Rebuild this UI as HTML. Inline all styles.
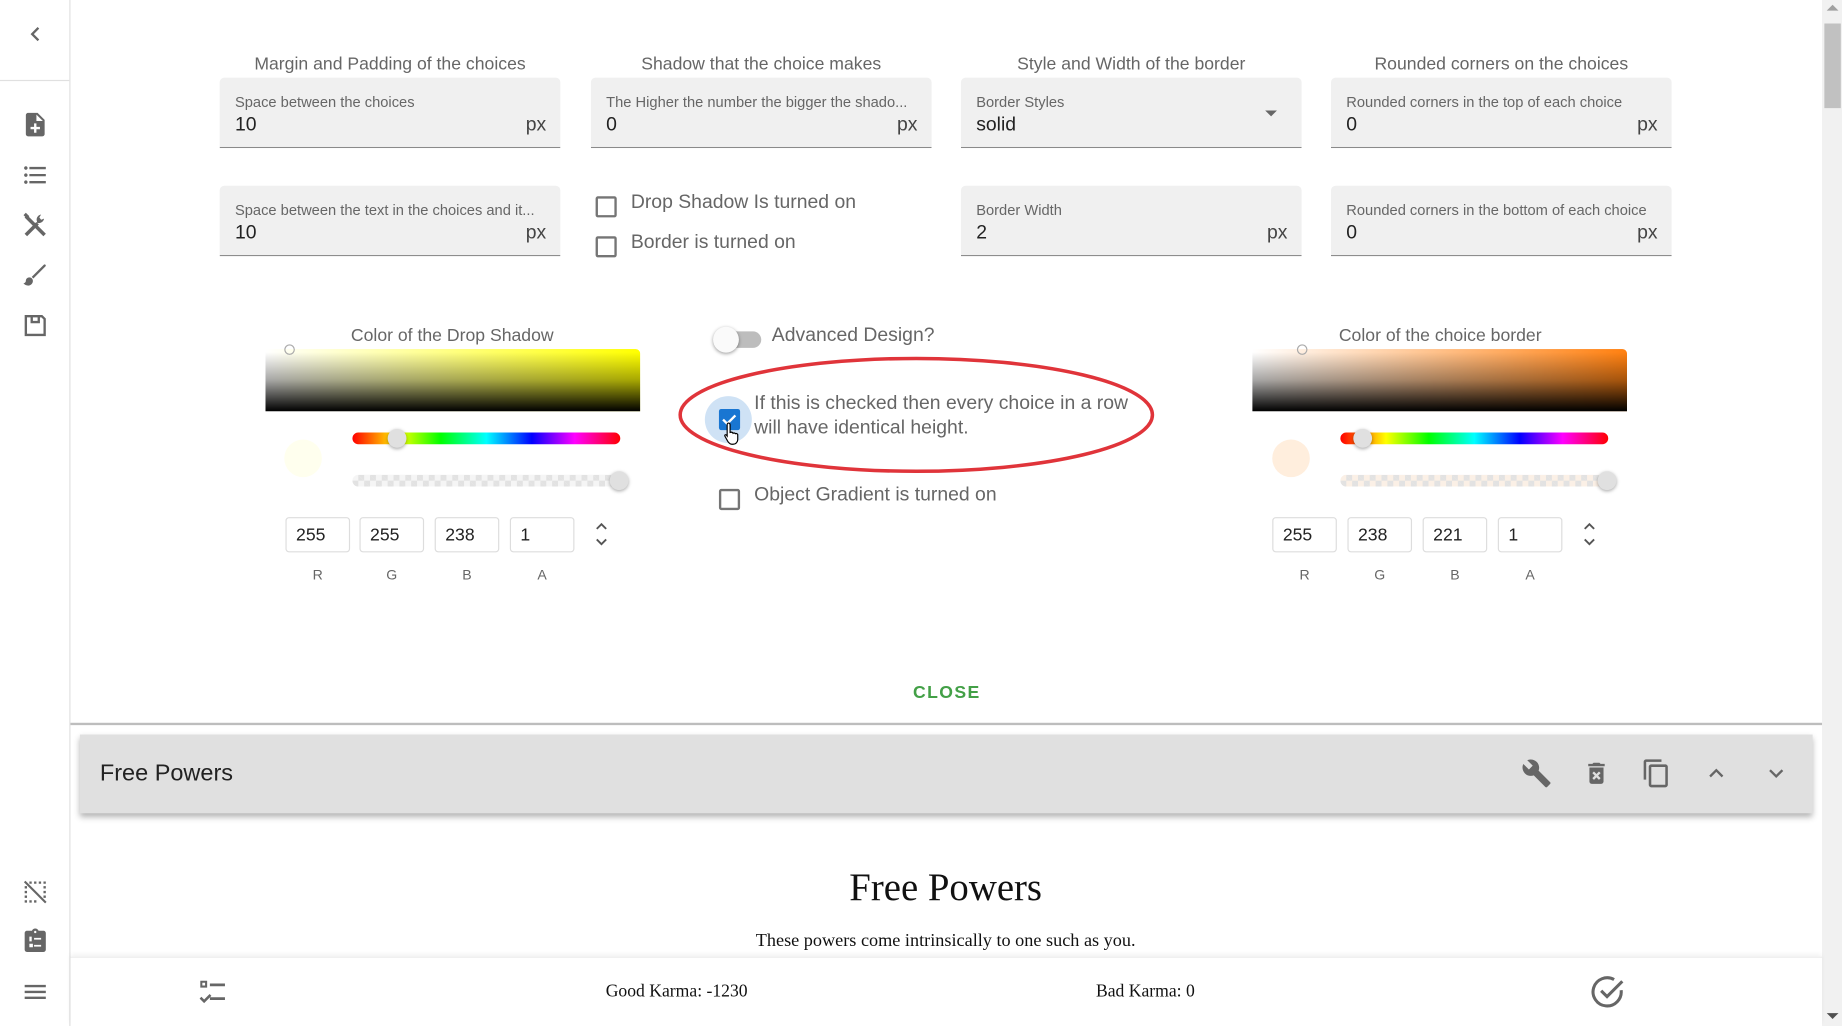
<!DOCTYPE html>
<html><head><meta charset="utf-8"><style>
*{box-sizing:border-box;margin:0;padding:0}
html,body{width:1842px;height:1026px;overflow:hidden;background:#fff;font-family:"Liberation Sans",sans-serif}
#w{position:absolute;left:0;top:0;width:1568px;height:873px;transform:scale(1.17474,1.17526);transform-origin:0 0;background:#fff}
.a{position:absolute}
.side{left:0;top:0;width:60px;height:873px;border-right:1px solid #e0e0e0;background:#fff}
.ic{position:absolute;width:24px;height:24px;fill:#666}
.title{position:absolute;width:290px;text-align:center;font-size:15px;color:#666;top:46px}
.field{position:absolute;width:290px;height:60px;background:#f0f0f0;border-bottom:1px solid #8a8a8a;border-radius:4px 4px 0 0}
.field .l{position:absolute;left:13px;top:14px;font-size:12.5px;color:#666;white-space:nowrap}
.field .v{position:absolute;left:13px;top:31px;font-size:16.5px;color:#222}
.field .px{position:absolute;right:12px;top:31px;font-size:16.5px;color:#444}
.cb{position:absolute;width:18px;height:18px;border:2px solid #757575;border-radius:2px}
.ct{position:absolute;font-size:16.5px;color:#666;white-space:nowrap}
.grad{position:absolute;width:319px;height:53px}
.hue{position:absolute;width:228px;height:10px;border-radius:5px;background:linear-gradient(to right,#f00,#ff0 17%,#0f0 33%,#0ff 50%,#00f 67%,#f0f 83%,#f00)}
.alpha{position:absolute;width:228px;height:10px;border-radius:5px;background-image:linear-gradient(45deg,#ddd 25%,transparent 25%,transparent 75%,#ddd 75%),linear-gradient(45deg,#ddd 25%,transparent 25%,transparent 75%,#ddd 75%);background-size:10px 10px;background-position:0 0,5px 5px;background-color:#f4f4f4;opacity:.85}
.th{position:absolute;width:16px;height:16px;border-radius:50%;background:#e0e0e0;box-shadow:0 1px 3px rgba(0,0,0,.35)}
.inp{position:absolute;width:55px;height:30px;border:1px solid #ddd;border-radius:3px;font-size:15px;color:#222;padding:6px 0 0 8px}
.lab{position:absolute;width:55px;text-align:center;font-size:12px;color:#666}
</style></head><body><div id="w">

<div class="a side">
 <svg class="ic" style="left:18px;top:17px;width:24px" viewBox="0 0 24 24"><path d="M15.4 7.4L14 6l-6 6 6 6 1.4-1.4-4.6-4.6z"/></svg>
 <div class="a" style="left:0;top:68px;width:59px;height:1px;background:#e0e0e0"></div>
 <svg class="ic" style="left:18px;top:94px" viewBox="0 0 24 24"><path d="M14 2H6c-1.1 0-1.99.9-1.99 2L4 20c0 1.1.89 2 1.99 2H18c1.1 0 2-.9 2-2V8l-6-6zm2 14h-3v3h-2v-3H8v-2h3v-3h2v3h3v2zm-3-7V3.5L18.5 9H13z"/></svg>
 <svg class="ic" style="left:18px;top:137px" viewBox="0 0 24 24"><path d="M4 10.5c-.83 0-1.5.67-1.5 1.5s.67 1.5 1.5 1.5 1.5-.67 1.5-1.5-.67-1.5-1.5-1.5zm0-6c-.83 0-1.5.67-1.5 1.5S3.170 7.5 4 7.5 5.5 6.83 5.5 6 4.830 4.5 4 4.5zm0 12c-.83 0-1.5.68-1.5 1.5s.68 1.5 1.5 1.5 1.5-.68 1.5-1.5-.67-1.5-1.5-1.5zM7 19h14v-2H7v2zm0-6h14v-2H7v2zm0-8v2h14V5H7z"/></svg>
 <svg class="ic" style="left:18px;top:180px" viewBox="0 0 24 24"><path d="M4 20L14 10" stroke="#666" stroke-width="3"/><path d="M13.5 8.5c-1-2.5.5-5.5 3.5-6l-1.5 2.5 1.5 2 2.5-1c-.5 3-3.5 4.5-6 3.5z"/><path d="M4 4l16 16" stroke="#666" stroke-width="3"/><path d="M2 3l2-2 3 3-2 2z"/></svg>
 <svg class="ic" style="left:18px;top:222px" viewBox="0 0 24 24"><path d="M20.7 3.3c-.4-.4-1-.4-1.4 0L9 13.6l1.4 1.4L20.7 4.7c.4-.4.4-1 0-1.4zM7 14c-1.7 0-3 1.3-3 3 0 1.3-1.2 2-2 2 .9 1.2 2.5 2 4 2 2.2 0 4-1.8 4-4 0-1.7-1.3-3-3-3z"/></svg>
 <svg class="ic" style="left:18px;top:265px" viewBox="0 0 24 24"><path d="M3 3h15l3 3v15H3V3zm2 2v14h14V6.8L17.2 5H16v5H8V5H5zm5 0v3h4V5h-4z"/></svg>
 <svg class="ic" style="left:18px;top:747px" viewBox="0 0 24 24"><path d="M3 3l18 18" stroke="#666" stroke-width="1.8"/><path d="M7 3h2v2H7zM11 3h2v2h-2zM15 3h2v2h-2zM19 3h2v2h-2zM19 7h2v2h-2zM19 11h2v2h-2zM19 15h2v2h-2zM3 7h2v2H3zM3 11h2v2H3zM3 15h2v2H3zM3 19h2v2H3zM7 19h2v2H7zM11 19h2v2h-2z"/></svg>
 <svg class="ic" style="left:18px;top:789px" viewBox="0 0 24 24"><path d="M19 3h-4.18C14.4 1.84 13.3 1 12 1c-1.3 0-2.4.84-2.82 2H5c-1.1 0-2 .9-2 2v14c0 1.1.9 2 2 2h14c1.1 0 2-.9 2-2V5c0-1.1-.9-2-2-2zm-7 0c.55 0 1 .45 1 1s-.45 1-1 1-1-.45-1-1 .45-1 1-1zM7 8h2v4H7zM11 9h6v1.5h-6zM7 14h3v3H7zM11 15h6v1.5h-6z"/></svg>
 <svg class="ic" style="left:18px;top:832px" viewBox="0 0 24 24"><path d="M3 6h18v2H3zM3 11h18v2H3zM3 16h18v2H3z"/></svg>
</div>

<div class="a" style="left:1551px;top:0;width:17px;height:873px;background:#f1f1f1"></div>
<div class="a" style="left:1553px;top:20px;width:14px;height:72px;background:#c1c1c1"></div>
<div class="a" style="left:1555px;top:4px;width:0;height:0;border-left:5px solid transparent;border-right:5px solid transparent;border-bottom:5px solid #a0a0a0"></div>
<div class="a" style="left:1555px;top:862px;width:0;height:0;border-left:5px solid transparent;border-right:5px solid transparent;border-top:5px solid #505050"></div>

<div class="title" style="left:187px">Margin and Padding of the choices</div>
<div class="title" style="left:503px">Shadow that the choice makes</div>
<div class="title" style="left:818px">Style and Width of the border</div>
<div class="title" style="left:1133px">Rounded corners on the choices</div>

<div class="field" style="left:187px;top:66px"><div class="l">Space between the choices</div><div class="v">10</div><div class="px">px</div></div>
<div class="field" style="left:503px;top:66px"><div class="l">The Higher the number the bigger the shado...</div><div class="v">0</div><div class="px">px</div></div>
<div class="field" style="left:818px;top:66px"><div class="l">Border Styles</div><div class="v">solid</div><div class="a" style="right:21px;top:28px;border-left:5px solid transparent;border-right:5px solid transparent;border-top:5px solid #666"></div></div>
<div class="field" style="left:1133px;top:66px"><div class="l">Rounded corners in the top of each choice</div><div class="v">0</div><div class="px">px</div></div>

<div class="field" style="left:187px;top:158px"><div class="l">Space between the text in the choices and it...</div><div class="v">10</div><div class="px">px</div></div>
<div class="cb" style="left:507px;top:167px"></div><div class="ct" style="left:537px;top:163px">Drop Shadow Is turned on</div>
<div class="cb" style="left:507px;top:201px"></div><div class="ct" style="left:537px;top:197px">Border is turned on</div>
<div class="field" style="left:818px;top:158px"><div class="l">Border Width</div><div class="v">2</div><div class="px">px</div></div>
<div class="field" style="left:1133px;top:158px"><div class="l">Rounded corners in the bottom of each choice</div><div class="v">0</div><div class="px">px</div></div>

<div class="title" style="left:240px;top:277px">Color of the Drop Shadow</div>
<div class="grad" style="left:226px;top:297px;background:linear-gradient(to bottom,rgba(0,0,0,0) 5%,rgba(0,0,0,.35) 50%,#000),linear-gradient(to right,#fff,#ff0);border-radius:0 4px 0 0"></div>
<div class="a" style="left:242px;top:293px;width:9px;height:9px;border-radius:50%;border:1.5px solid #aaa"></div>
<div class="a" style="left:242px;top:374px;width:32px;height:32px;border-radius:50%;background:#ffffee"></div>
<div class="hue" style="left:300px;top:368px"></div><div class="th" style="left:330px;top:365px"></div>
<div class="alpha" style="left:300px;top:404px"></div><div class="th" style="left:519px;top:401px"></div>
<div class="inp" style="left:243px;top:440px">255</div>
<div class="inp" style="left:306px;top:440px">255</div>
<div class="inp" style="left:370px;top:440px">238</div>
<div class="inp" style="left:434px;top:440px">1</div>
<svg class="a" style="left:505px;top:444px" width="14" height="22" viewBox="0 0 14 22"><path d="M3 6l4-4 4 4M3 15l4 4 4-4" fill="none" stroke="#555" stroke-width="1.6"/></svg>
<div class="lab" style="left:243px;top:482px">R</div><div class="lab" style="left:306px;top:482px">G</div><div class="lab" style="left:370px;top:482px">B</div><div class="lab" style="left:434px;top:482px">A</div>

<div class="a" style="left:612px;top:282px;width:36px;height:14px;border-radius:7px;background:#bdbdbd"></div>
<div class="a" style="left:607px;top:278px;width:22px;height:22px;border-radius:50%;background:#fafafa;box-shadow:0 1px 3px rgba(0,0,0,.4)"></div>
<div class="ct" style="left:657px;top:276px">Advanced Design?</div>
<div class="a" style="left:600px;top:337px;width:40px;height:40px;border-radius:50%;background:#cfe2f5"></div>
<div class="a" style="left:612px;top:348px;width:18px;height:18px;border-radius:2px;background:#1976d2"></div>
<svg class="a" style="left:612px;top:348px" width="18" height="18" viewBox="0 0 18 18"><path d="M3.5 9l3.5 3.5 7-7" fill="none" stroke="#fff" stroke-width="2"/></svg>
<svg class="a" style="left:616px;top:358px" width="16" height="22" viewBox="0 0 16 22"><path d="M4 2c1 0 1.5.7 1.5 1.5V10l1-.3c.8 0 1.3.5 1.5 1 .5-.4 1.5-.4 2 .3.6-.3 1.600-.1 2 .7V16c0 2-1.500 4-4 4H7c-1.5 0-2.5-1-3.5-2.5L1 13c-.3-.8.6-1.5 1.3-.9L3 13V3.5C3 2.700 3.3 2 4 2z" fill="#fff" stroke="#000" stroke-width="1"/></svg>
<div class="ct" style="left:642px;top:333px;line-height:21px">If this is checked then every choice in a row<br>will have identical height.</div>
<svg class="a" style="left:570px;top:300px" width="420" height="110" viewBox="0 0 420 110"><ellipse cx="210" cy="53" rx="201" ry="48" fill="none" stroke="#e0343a" stroke-width="3"/></svg>
<div class="cb" style="left:612px;top:416px"></div><div class="ct" style="left:642px;top:412px">Object Gradient is turned on</div>

<div class="title" style="left:1081px;top:277px">Color of the choice border</div>
<div class="grad" style="left:1066px;top:297px;background:linear-gradient(to bottom,rgba(0,0,0,0) 5%,rgba(0,0,0,.35) 50%,#000),linear-gradient(to right,#fff,#ff8010);border-radius:0 4px 0 0"></div>
<div class="a" style="left:1104px;top:293px;width:9px;height:9px;border-radius:50%;border:1.5px solid #aaa"></div>
<div class="a" style="left:1083px;top:374px;width:32px;height:32px;border-radius:50%;background:#ffeedd"></div>
<div class="hue" style="left:1141px;top:368px"></div><div class="th" style="left:1152px;top:365px"></div>
<div class="alpha" style="left:1141px;top:404px;background-color:#fbeee2"></div><div class="th" style="left:1360px;top:401px"></div>
<div class="inp" style="left:1083px;top:440px">255</div>
<div class="inp" style="left:1147px;top:440px">238</div>
<div class="inp" style="left:1211px;top:440px">221</div>
<div class="inp" style="left:1275px;top:440px">1</div>
<svg class="a" style="left:1346px;top:444px" width="14" height="22" viewBox="0 0 14 22"><path d="M3 6l4-4 4 4M3 15l4 4 4-4" fill="none" stroke="#555" stroke-width="1.6"/></svg>
<div class="lab" style="left:1083px;top:482px">R</div><div class="lab" style="left:1147px;top:482px">G</div><div class="lab" style="left:1211px;top:482px">B</div><div class="lab" style="left:1275px;top:482px">A</div>

<div class="a" style="left:700px;top:581px;width:212px;text-align:center;font-size:15px;font-weight:bold;color:#43a047;letter-spacing:1.2px">CLOSE</div>
<div class="a" style="left:60px;top:615px;width:1491px;height:2px;background:#bdbdbd"></div>

<div class="a" style="left:68px;top:625px;width:1475px;height:67px;background:#e0e0e0;box-shadow:0 3px 5px rgba(0,0,0,.3)"></div>
<div class="a" style="left:85px;top:647px;font-size:20px;color:#222">Free Powers</div>
<svg class="ic" style="left:1295px;top:645px;width:26px;height:26px" viewBox="0 0 24 24"><path d="M22.7 19l-9.1-9.1c.9-2.3.4-5-1.5-6.9-2-2-5-2.4-7.4-1.3L9 6 6 9 1.6 4.7C.4 7.1.9 10.1 2.9 12.1c1.9 1.9 4.6 2.4 6.9 1.5l9.1 9.1c.4.4 1 .4 1.4 0l2.3-2.3c.5-.4.5-1.1.1-1.4z"/></svg>
<svg class="ic" style="left:1347px;top:646px" viewBox="0 0 24 24"><path d="M6 19c0 1.1.9 2 2 2h8c1.1 0 2-.9 2-2V7H6v12zm2.46-7.12l1.41-1.41L12 12.59l2.12-2.12 1.41 1.41L13.41 14l2.12 2.12-1.41 1.41L12 15.41l-2.12 2.12-1.41-1.41L10.59 14l-2.13-2.12zM15.5 4l-1-1h-5l-1 1H5v2h14V4z"/></svg>
<svg class="ic" style="left:1397px;top:645px;width:26px;height:26px" viewBox="0 0 24 24"><path d="M16 1H4c-1.1 0-2 .9-2 2v14h2V3h12V1zm3 4H8c-1.1 0-2 .9-2 2v14c0 1.1.9 2 2 2h11c1.1 0 2-.9 2-2V7c0-1.1-.9-2-2-2zm0 16H8V7h11v14z"/></svg>
<svg class="ic" style="left:1449px;top:646px" viewBox="0 0 24 24"><path d="M7.4 15.4L12 10.8l4.6 4.6L18 14l-6-6-6 6z"/></svg>
<svg class="ic" style="left:1500px;top:646px" viewBox="0 0 24 24"><path d="M7.4 8.6L12 13.2l4.6-4.6L18 10l-6 6-6-6z"/></svg>

<div class="a" style="left:560px;top:738px;width:490px;text-align:center;font-family:'Liberation Serif',serif;font-size:33px;color:#111">Free Powers</div>
<div class="a" style="left:505px;top:792px;width:600px;text-align:center;font-family:'Liberation Serif',serif;font-size:15.5px;color:#111">These powers come intrinsically to one such as you.</div>

<div class="a" style="left:60px;top:814px;width:1491px;height:59px;background:#fff;box-shadow:0 -2px 4px rgba(0,0,0,.06);border-top:1px solid #eee"></div>
<svg class="ic" style="left:167px;top:831px;width:28px;height:28px" viewBox="0 0 24 24"><path d="M3 3h5v5H3zM4.5 4.5v2h2v-2zM10 5h11v2H10zM10 15h11v2H10zM2.5 16l1.3-1.3 2 2 4-4 1.3 1.3-5.3 5.3z"/></svg>
<div class="a" style="left:476px;top:836px;width:200px;text-align:center;font-family:'Liberation Serif',serif;font-size:15px;color:#111">Good Karma: -1230</div>
<div class="a" style="left:875px;top:836px;width:200px;text-align:center;font-family:'Liberation Serif',serif;font-size:15px;color:#111">Bad Karma: 0</div>
<svg class="a" style="left:1354px;top:828px" width="32" height="32" viewBox="0 0 32 32"><path d="M26 14.5A12 12 0 1 1 20 5.5" fill="none" stroke="#666" stroke-width="2.6"/><path d="M9 15l5 5L27 7" fill="none" stroke="#666" stroke-width="2.6"/></svg>

</div></body></html>
